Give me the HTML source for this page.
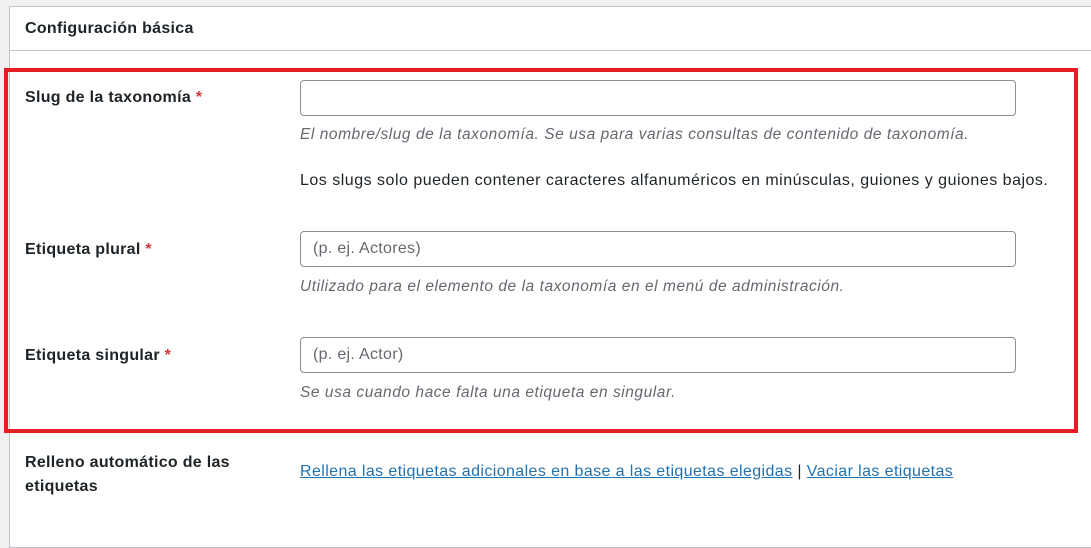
<!DOCTYPE html>
<html><head><meta charset="utf-8"><style>
body{margin:0;width:1091px;height:517px;background:#f0f0f1;font-family:"Liberation Sans",sans-serif;color:#1d2327;position:relative;overflow:hidden}
.panel{position:absolute;left:9px;top:6px;width:1100px;height:540px;background:#fff;border:1px solid #c3c4c7}
.hdr{position:absolute;left:9px;top:6px;width:1100px;height:44px;border-bottom:1px solid #c3c4c7}
.t{position:absolute;white-space:nowrap}
.h{left:25px;top:20px;font-size:16px;font-weight:bold;letter-spacing:0.3px}
.lbl{left:25px;font-size:16px;font-weight:bold;letter-spacing:0.3px}
.lbl span{color:#d63638}
.in{position:absolute;left:300px;width:714px;height:34px;border:1px solid #8c8f94;border-radius:4px;background:#fff}
.ph{position:absolute;left:12px;top:8px;font-size:16px;color:#646970;letter-spacing:0.3px}
.d{left:300px;font-size:15.5px;font-style:italic;color:#646970;letter-spacing:0.55px}
.p{left:300px;font-size:16px;letter-spacing:0.5px}
.red{position:absolute;left:4px;top:68px;width:1066px;height:357px;border:4px solid #e31e24}
a{color:#2271b1;text-decoration:underline}
</style></head><body>
<div class="panel"></div><div class="hdr"></div>
<div class="t h">Configuración básica</div>
<div class="t lbl" style="top:89px">Slug de la taxonomía <span>*</span></div>
<div class="in" style="top:80px"></div>
<div class="t d" style="top:126px">El nombre/slug de la taxonomía. Se usa para varias consultas de contenido de taxonomía.</div>
<div class="t p" style="top:172px">Los slugs solo pueden contener caracteres alfanuméricos en minúsculas, guiones y guiones bajos.</div>
<div class="t lbl" style="top:241px">Etiqueta plural <span>*</span></div>
<div class="in" style="top:231px"><div class="ph">(p. ej. Actores)</div></div>
<div class="t d" style="top:278px">Utilizado para el elemento de la taxonomía en el menú de administración.</div>
<div class="t lbl" style="top:347px">Etiqueta singular <span>*</span></div>
<div class="in" style="top:337px"><div class="ph">(p. ej. Actor)</div></div>
<div class="t d" style="top:384px">Se usa cuando hace falta una etiqueta en singular.</div>
<div class="red"></div>
<div class="t lbl" style="top:451px;line-height:24px">Relleno automático de las<br>etiquetas</div>
<div class="t p" style="top:463px;letter-spacing:0.4px"><a>Rellena las etiquetas adicionales en base a las etiquetas elegidas</a> | <a>Vaciar las etiquetas</a></div>
</body></html>
